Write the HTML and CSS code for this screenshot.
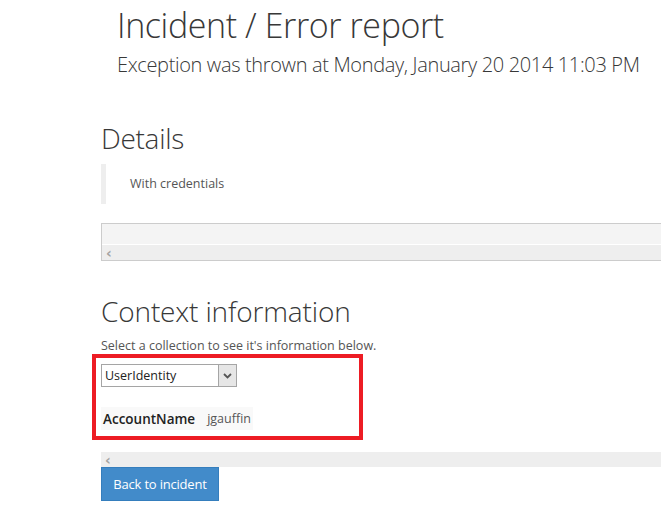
FILE: index.html
```html
<!DOCTYPE html>
<html>
<head>
<meta charset="utf-8">
<link rel="stylesheet" href="styles.css">
</head>
<body>
<div class="page">
  <header class="hero">
    <h1 class="title">Incident / Error report</h1>
    <p class="subtitle">Exception was thrown at Monday, January 20 2014 11:03 PM</p>
  </header>

  <h2 class="section-title details-title">Details</h2>
  <blockquote class="quote">With credentials</blockquote>

  <div class="scroll-box">
    <div class="scroll-content"></div>
    <div class="hscroll"><span class="arrow">&#8249;</span></div>
  </div>

  <h2 class="section-title context-title">Context information</h2>
  <p class="hint">Select a collection to see it's information below.</p>

  <div class="highlight">
    <div class="select">
      <span class="select-value">UserIdentity</span>
      <span class="select-btn">
        <svg width="9" height="6" viewBox="0 0 9 6"><path d="M1 1 L4.5 4.5 L8 1" fill="none" stroke="#555" stroke-width="1.8"/></svg>
      </span>
    </div>
    <table class="props">
      <tr><th>AccountName</th><td>jgauffin</td></tr>
    </table>
  </div>

  <div class="hscroll bottom-scroll"><span class="arrow">&#8249;</span></div>
  <button class="btn">Back to incident</button>
</div>
</body>
</html>
```

FILE: styles.css
```css
html, body {
  margin: 0;
  padding: 0;
  background: #fff;
}
body {
  font-family: "Open Sans", "Noto Sans", sans-serif;
  color: #333;
  overflow: hidden;
}
.page {
  padding-left: 101px;
}
.hero {
  padding-left: 16px;
}
.title {
  margin: 0;
  padding-top: 2px;
  font-size: 34px;
  font-weight: 300;
  line-height: 46px;
  letter-spacing: -0.4px;
  color: #383838;
}
.subtitle {
  margin: 4px 0 0;
  font-size: 20px;
  font-weight: 300;
  line-height: 26px;
  letter-spacing: -0.35px;
  color: #383838;
}
.section-title {
  margin: 0;
  font-weight: 300;
  font-size: 28px;
  line-height: 36px;
  letter-spacing: -0.3px;
  color: #383838;
}
.details-title {
  margin-top: 42px;
}
.quote {
  margin: 8px 0 0;
  border-left: 5px solid #eee;
  padding: 10px 0 10px 24px;
  font-size: 12.5px;
  font-weight: 400;
  line-height: 20px;
  color: #555;
}
.scroll-box {
  margin-top: 19px;
  border: 1px solid #ccc;
  border-right: none;
  background: #f4f4f4;
}
.scroll-content {
  height: 20px;
}
.hscroll {
  height: 15px;
  border-top: 1px solid #fff;
  background: #eee;
  display: flex;
  align-items: center;
}
.arrow {
  font-size: 14px;
  line-height: 14px;
  color: #a3a3a3;
  padding-left: 4px;
  font-weight: 700;
  font-family: "DejaVu Sans", sans-serif;
}
.context-title {
  margin-top: 32px;
  letter-spacing: -0.15px;
}
.hint {
  margin: 8px 0 0;
  font-size: 12.5px;
  line-height: 17px;
  color: #555;
}
.highlight {
  margin-left: -9px;
  width: 258px;
  border: 4px solid #ed1c24;
  padding: 6px 0 6px 5px;
}
.select {
  display: flex;
  width: 136px;
  height: 23px;
  box-sizing: border-box;
  border: 1px solid #a5a5a5;
  background: #fff;
}
.select-value {
  flex: 1;
  padding-left: 3px;
  font-size: 12.5px;
  line-height: 21px;
  color: #222;
}
.select-btn {
  width: 17px;
  border-left: 1px solid #a5a5a5;
  background: #e6e6e6;
  display: flex;
  align-items: center;
  justify-content: center;
}
.props {
  margin-top: 20px;
  border-collapse: collapse;
  background: #f9f9f9;
}
.props th {
  font-weight: 600;
  font-size: 13.5px;
  text-align: left;
  padding: 3px 4px 2px 2px;
  line-height: 18px;
  color: #222;
}
.props td {
  font-size: 12.5px;
  padding: 3px 2px 2px 8px;
  line-height: 18px;
  color: #555;
}
.bottom-scroll {
  margin-top: 12px;
  border-top: none;
  height: 15px;
}
.btn {
  display: block;
  margin: 0;
  width: 118px;
  height: 34px;
  border: 1px solid #357ebd;
  background: #428bca;
  color: #fff;
  font-family: "Open Sans", "Noto Sans", sans-serif;
  font-size: 13px;
  font-weight: 400;
  padding: 0;
  letter-spacing: -0.2px;
}
```
